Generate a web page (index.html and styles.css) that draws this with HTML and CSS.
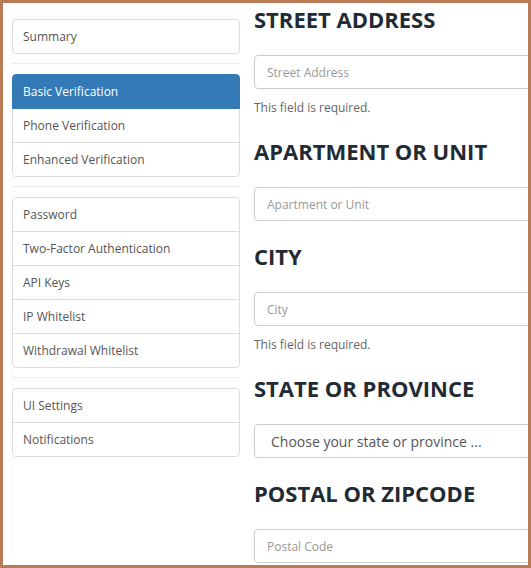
FILE: index.html
```html
<!DOCTYPE html>
<html lang="en">
<head>
    <meta charset="UTF-8">
    <meta name="viewport" content="width=device-width, initial-scale=1.0">
    <title>Basic Verification</title>
    <link rel="stylesheet" href="styles.css">
</head>
<body>
    <div class="frame">
        <div class="sidebar">
            <div class="list-group">
                <a class="list-item" href="#">Summary</a>
            </div>
            <hr>
            <div class="list-group">
                <a class="list-item active" href="#">Basic Verification</a>
                <a class="list-item" href="#">Phone Verification</a>
                <a class="list-item" href="#">Enhanced Verification</a>
            </div>
            <hr>
            <div class="list-group">
                <a class="list-item" href="#">Password</a>
                <a class="list-item" href="#">Two-Factor Authentication</a>
                <a class="list-item" href="#">API Keys</a>
                <a class="list-item" href="#">IP Whitelist</a>
                <a class="list-item" href="#">Withdrawal Whitelist</a>
            </div>
            <hr>
            <div class="list-group">
                <a class="list-item" href="#">UI Settings</a>
                <a class="list-item" href="#">Notifications</a>
            </div>
        </div>

        <form class="main">
            <div class="field">
                <h3>Street Address</h3>
                <input type="text" placeholder="Street Address">
                <p class="help">This field is required.</p>
            </div>
            <div class="field">
                <h3>Apartment or Unit</h3>
                <input type="text" placeholder="Apartment or Unit">
            </div>
            <div class="field">
                <h3>City</h3>
                <input type="text" placeholder="City">
                <p class="help">This field is required.</p>
            </div>
            <div class="field">
                <h3>State or Province</h3>
                <select>
                    <option>Choose your state or province ...</option>
                </select>
            </div>
            <div class="field">
                <h3>Postal or Zipcode</h3>
                <input type="text" placeholder="Postal Code">
            </div>
        </form>
    </div>
</body>
</html>
```

FILE: styles.css
```css
body {
    margin: 0;
    font-family: "Open Sans", "Liberation Sans", sans-serif;
    background-color: #ffffff;
}

.frame {
    box-sizing: border-box;
    width: 531px;
    height: 568px;
    border: 3px solid #b97a57;
    overflow: hidden;
    display: flex;
    align-items: flex-start;
    padding-left: 9px;
}

/* Sidebar */
.sidebar {
    width: 228px;
    flex-shrink: 0;
    margin-top: 16px;
}

.sidebar hr {
    border: none;
    border-top: 1px solid #eeeeee;
    margin: 9px 0 10px;
}

.list-group {
    display: flex;
    flex-direction: column;
}

.list-item {
    display: block;
    height: 35px;
    box-sizing: border-box;
    padding: 8px 10px;
    line-height: 17px;
    font-size: 12px;
    color: #555555;
    text-decoration: none;
    border: 1px solid #dddddd;
    margin-bottom: -1px;
    background-color: #ffffff;
}

.list-item:first-child {
    border-top-left-radius: 4px;
    border-top-right-radius: 4px;
}

.list-item:last-child {
    margin-bottom: 0;
    border-bottom-left-radius: 4px;
    border-bottom-right-radius: 4px;
}

.list-item.active {
    background-color: #337ab7;
    border-color: #337ab7;
    color: #ffffff;
    position: relative;
}

/* Form */
.main {
    width: 320px;
    flex-shrink: 0;
    margin-left: 14px;
    padding-top: 3px;
}

.field h3 {
    margin: 0 0 23px;
    font-size: 22px;
    line-height: 26px;
    font-weight: 700;
    text-transform: uppercase;
    color: #222b33;
}

.field {
    margin-bottom: 22px;
}

.field input, .field select {
    display: block;
    box-sizing: border-box;
    width: 100%;
    height: 34px;
    padding: 6px 12px;
    font-family: inherit;
    font-size: 12px;
    color: #555555;
    border: 1px solid #cccccc;
    border-radius: 4px;
    background-color: #ffffff;
    outline: none;
}

.field input::placeholder {
    color: #999999;
}

.field select {
    appearance: none;
    -webkit-appearance: none;
    padding-left: 16px;
    font-size: 14px;
}

.help {
    margin: 10px 0 0;
    font-size: 12px;
    line-height: 17px;
    color: #666666;
}
```
